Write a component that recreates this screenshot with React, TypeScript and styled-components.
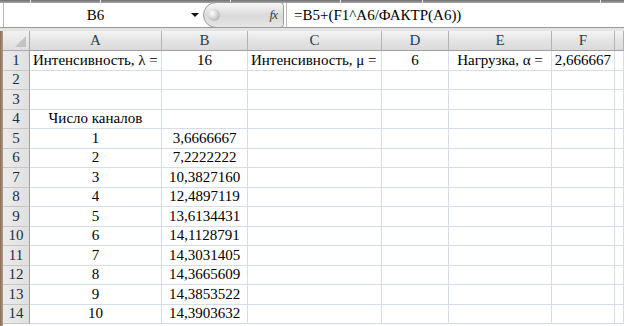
import React from 'react';
import styled, { createGlobalStyle } from 'styled-components';

const GlobalStyle = createGlobalStyle`
    html, body {
        margin: 0;
        padding: 0;
        background: #ffffff;
    }
    body {
        font-family: "Liberation Serif", "Times New Roman", serif;
    }
`;

const Window = styled.div`
    width: 624px;
    height: 326px;
    overflow: hidden;
    display: flex;
    flex-direction: column;
    background: #ffffff;
`;

const RibbonEdge = styled.div`
    height: 3px;
    display: flex;
    background: #8c8c8c;
`;

const RibbonGroup = styled.div<{ $w: number }>`
    width: ${p => p.$w}px;
    flex: none;
    border-right: 1px solid #e8e8e8;
    box-sizing: border-box;
    background: linear-gradient(#6f6f6f, #a9a9a9);
`;

const FormulaBar = styled.div`
    height: 24px;
    display: flex;
    align-items: stretch;
    border-bottom: 1px solid #9a9a9a;
    background: #ffffff;
`;

const NameBox = styled.div`
    width: 183px;
    margin-left: 3px;
    border-left: 1px solid #b9b9b9;
    display: flex;
    align-items: center;
    justify-content: center;
    font-size: 15px;
    color: #000;
`;

const DropArrow = styled.div`
    width: 16px;
    display: flex;
    align-items: center;
    justify-content: center;
    &::after {
        content: '';
        border-left: 4px solid transparent;
        border-right: 4px solid transparent;
        border-top: 4px solid #111;
    }
`;

const FxPill = styled.div`
    width: 81px;
    margin-top: -1px;
    margin-bottom: -1px;
    border: 1px solid #9d9d9d;
    border-radius: 14px 4px 4px 14px;
    box-sizing: border-box;
    background: linear-gradient(#f7f7f7, #d9d9d9 55%, #e6e6e6);
    display: flex;
    align-items: center;
    justify-content: space-between;
    padding: 0 6px 0 4px;
`;

const PillKnob = styled.div`
    width: 12px;
    height: 12px;
    border-radius: 50%;
    background: radial-gradient(circle at 35% 35%, #ffffff, #bdbdbd 70%, #a3a3a3);
`;

const FxLabel = styled.span`
    font-style: italic;
    font-size: 13px;
    color: #3a3a3a;
    letter-spacing: -1px;
`;

const FormulaInput = styled.div`
    flex: 1;
    display: flex;
    align-items: center;
    padding-left: 7px;
    border-left: 1px solid #b9b9b9;
    margin-left: 2px;
    font-size: 15px;
    color: #000;
    white-space: nowrap;
`;

const Gap = styled.div`
    height: 3px;
    background: #e3e3e3;
`;

const SheetArea = styled.div`
    flex: 1;
    display: flex;
    min-height: 0;
`;

const FrameEdge = styled.div`
    width: 3px;
    flex: none;
    background: linear-gradient(90deg, #8a6d58, #b39b86);
`;

const Grid = styled.div`
    flex: 1;
    display: grid;
    grid-template-columns: 27px 132px 86px 134px 67px 103px 63px 1fr;
    grid-template-rows: 20px repeat(14, 19.5px);
    align-content: start;
`;

const Corner = styled.div`
    position: relative;
    background: linear-gradient(#f2f2f2, #dedede);
    border-right: 1px solid #a9a9a9;
    border-bottom: 1px solid #a9a9a9;
    &::after {
        content: '';
        position: absolute;
        right: 3px;
        bottom: 3px;
        border-left: 11px solid transparent;
        border-bottom: 11px solid #c3c3c3;
    }
`;

const ColHead = styled.div`
    background: linear-gradient(#f5f5f5, #e4e4e4 50%, #dadada);
    border-right: 1px solid #b3b3b3;
    border-bottom: 1px solid #9f9f9f;
    display: flex;
    align-items: center;
    justify-content: center;
    font-size: 15px;
    color: #273d56;
`;

const RowHead = styled.div`
    background: linear-gradient(90deg, #ececec, #e0e0e0);
    border-right: 1px solid #9f9f9f;
    border-bottom: 1px solid #c6c6c6;
    display: flex;
    align-items: center;
    justify-content: center;
    font-size: 15px;
    color: #1f2d3d;
`;

const Cell = styled.div<{ $align?: 'left' | 'center' | 'right' }>`
    border-right: 1px solid #d6dce8;
    border-bottom: 1px solid #d6dce8;
    display: flex;
    align-items: center;
    justify-content: ${p => p.$align === 'left' ? 'flex-start' : p.$align === 'right' ? 'flex-end' : 'center'};
    padding: 0 3px;
    font-size: 15px;
    color: #000;
    white-space: nowrap;
    overflow: visible;
    min-width: 0;
`;

const columns = ['A', 'B', 'C', 'D', 'E', 'F', ''];
const ribbon = [31, 70, 130, 110, 82, 178, 30];

type Row = { cells: [string, 'left' | 'center' | 'right'][] };

const values = [
    '3,6666667', '7,2222222', '10,3827160', '12,4897119', '13,6134431',
    '14,1128791', '14,3031405', '14,3665609', '14,3853522', '14,3903632',
];

const rows: Row[] = [
    {
        cells: [
            ['Интенсивность, λ =', 'left'], ['16', 'center'], ['Интенсивность, μ =', 'left'],
            ['6', 'center'], ['Нагрузка, α =', 'center'], ['2,666667', 'right'], ['', 'left'],
        ],
    },
    { cells: [] },
    { cells: [] },
    { cells: [['Число каналов', 'center']] },
    ...values.map((v, i) => ({ cells: [[String(i + 1), 'center'], [v, 'center']] as Row['cells'] })),
];

const App = () => {
    return (
        <>
            <GlobalStyle/>
            <Window>
                <RibbonEdge>
                    {ribbon.map((w, i) => <RibbonGroup key={i} $w={w}/>)}
                </RibbonEdge>
                <FormulaBar>
                    <NameBox>B6</NameBox>
                    <DropArrow/>
                    <FxPill>
                        <PillKnob/>
                        <FxLabel>fx</FxLabel>
                    </FxPill>
                    <FormulaInput>=B5+(F1^A6/ФАКТР(A6))</FormulaInput>
                </FormulaBar>
                <Gap/>
                <SheetArea>
                    <FrameEdge/>
                    <Grid>
                        <Corner/>
                        {columns.map((c, i) => <ColHead key={i}>{c}</ColHead>)}
                        {rows.map((row, r) => (
                            <React.Fragment key={r}>
                                <RowHead>{r + 1}</RowHead>
                                {columns.map((_, c) => {
                                    const cell = row.cells[c];
                                    return (
                                        <Cell key={c} $align={cell ? cell[1] : 'left'}>
                                            {cell ? cell[0] : ''}
                                        </Cell>
                                    );
                                })}
                            </React.Fragment>
                        ))}
                    </Grid>
                </SheetArea>
            </Window>
        </>
    );
};

export default App;
